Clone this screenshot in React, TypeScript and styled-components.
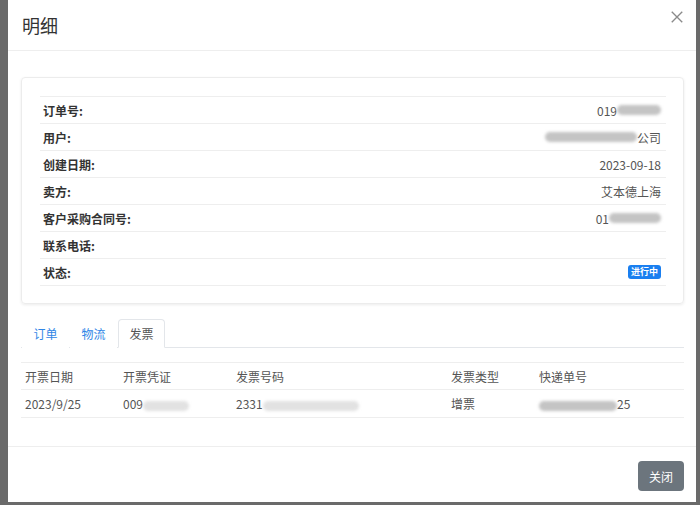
import type { ReactNode } from "react";
import styled, { createGlobalStyle } from "styled-components";

const GlobalStyle = createGlobalStyle`
  html, body {
    margin: 0;
    padding: 0;
    background: #6a6a6a;
    font-family: "Noto Sans CJK SC", "Noto Sans", sans-serif;
  }
`;

interface InfoRow {
  label: string;
  value: ReactNode;
}

const tabs = ["订单", "物流", "发票"];

const Detail = () => {
  const infoRows: InfoRow[] = [
    {
      label: "订单号:",
      value: (
        <>
          019
          <Blur $w={44} />
        </>
      ),
    },
    {
      label: "用户:",
      value: (
        <>
          <Blur $w={92} />
          公司
        </>
      ),
    },
    { label: "创建日期:", value: "2023-09-18" },
    { label: "卖方:", value: "艾本德上海" },
    {
      label: "客户采购合同号:",
      value: (
        <>
          01
          <Blur $w={52} />
        </>
      ),
    },
    { label: "联系电话:", value: "" },
    { label: "状态:", value: <Badge>进行中</Badge> },
  ];

  return (
    <>
      <GlobalStyle />
      <Modal>
        <Header>
          <Title>明细</Title>
          <CloseIcon viewBox="0 0 16 16">
            <path d="M2 2 L14 14 M14 2 L2 14" />
          </CloseIcon>
        </Header>

        <Body>
          <Card>
            {infoRows.map((row) => (
              <Row key={row.label}>
                <Label>{row.label}</Label>
                <Value>{row.value}</Value>
              </Row>
            ))}
          </Card>

          <TabNav>
            {tabs.map((t) => (
              <Tab key={t} $active={t === "发票"}>
                {t}
              </Tab>
            ))}
          </TabNav>

          <Table>
            <colgroup>
              <col style={{ width: 98 }} />
              <col style={{ width: 113 }} />
              <col style={{ width: 215 }} />
              <col style={{ width: 88 }} />
              <col />
            </colgroup>
            <thead>
              <tr>
                <th>开票日期</th>
                <th>开票凭证</th>
                <th>发票号码</th>
                <th>发票类型</th>
                <th>快递单号</th>
              </tr>
            </thead>
            <tbody>
              <tr>
                <td>2023/9/25</td>
                <td>
                  009
                  <Blur $w={46} $light />
                </td>
                <td>
                  2331
                  <Blur $w={96} $light />
                </td>
                <td>增票</td>
                <td>
                  <Blur $w={78} />
                  25
                </td>
              </tr>
            </tbody>
          </Table>
        </Body>

        <Footer>
          <CloseButton>关闭</CloseButton>
        </Footer>
      </Modal>
    </>
  );
};

const Modal = styled.div`
  margin-left: 8px;
  width: 688px;
  height: 502px;
  background: #fff;
  display: flex;
  flex-direction: column;
`;

const Header = styled.div`
  height: 51px;
  box-sizing: border-box;
  border-bottom: 1px solid #eeeeee;
  padding: 0 12px 0 14px;
  display: flex;
  align-items: center;
  justify-content: space-between;
`;

const Title = styled.h1`
  margin: 0;
  font-size: 18px;
  font-weight: 400;
  color: #333;
  line-height: 1;
`;

const CloseIcon = styled.svg`
  width: 14px;
  height: 14px;
  margin-bottom: 16px;
  fill: none;
  stroke: #8a8a8a;
  stroke-width: 1.6;
`;

const Body = styled.div`
  flex: 1;
  padding: 26px 12px 0 13px;
`;

const Card = styled.div`
  border: 1px solid #ececec;
  border-radius: 4px;
  box-shadow: 0 1px 3px rgba(0, 0, 0, 0.08);
  padding: 18px 17px 17px 18px;
`;

const Row = styled.div`
  height: 27px;
  box-sizing: border-box;
  border-top: 1px solid #eeeeee;
  display: flex;
  align-items: center;
  justify-content: space-between;
  padding: 0 5px 0 3px;
  font-size: 12px;

  &:last-child {
    border-bottom: 1px solid #eeeeee;
    height: 28px;
  }
`;

const Label = styled.span`
  font-weight: 700;
  color: #333;
`;

const Value = styled.span`
  color: #555;
  display: flex;
  align-items: center;
`;

const Blur = styled.span<{ $w: number; $light?: boolean }>`
  display: inline-block;
  width: ${(p) => p.$w}px;
  height: 10px;
  border-radius: 5px;
  background: ${(p) => (p.$light ? "#e2e2e2" : "#c4c4c4")};
  filter: blur(1.5px);
  vertical-align: middle;
`;

const Badge = styled.span`
  background: #1a7ff0;
  color: #fff;
  font-size: 9px;
  font-weight: 700;
  padding: 1px 3px;
  border-radius: 3px;
  line-height: 12px;
`;

const TabNav = styled.div`
  margin-top: 15px;
  height: 29px;
  box-sizing: border-box;
  border-bottom: 1px solid #e3e6ea;
  display: flex;
  gap: 1px;
  padding-left: 1px;
`;

const Tab = styled.div<{ $active?: boolean }>`
  width: 47px;
  box-sizing: border-box;
  height: 29px;
  display: flex;
  align-items: center;
  justify-content: center;
  font-size: 12px;
  color: ${(p) => (p.$active ? "#555" : "#2f86e6")};
  border: 1px solid ${(p) => (p.$active ? "#e3e6ea" : "transparent")};
  border-bottom-color: ${(p) => (p.$active ? "#fff" : "transparent")};
  border-radius: 4px 4px 0 0;
  background: #fff;
`;

const Table = styled.table`
  margin-top: 14px;
  width: 100%;
  border-collapse: collapse;
  table-layout: fixed;
  font-size: 12px;
  color: #555;

  th,
  td {
    text-align: left;
    font-weight: 400;
    padding: 0 4px;
    border-top: 1px solid #eeeeee;
    white-space: nowrap;
  }

  th {
    height: 26px;
  }

  td {
    height: 27px;
    border-bottom: 1px solid #eeeeee;
  }
`;

const Footer = styled.div`
  height: 56px;
  box-sizing: border-box;
  border-top: 1px solid #eeeeee;
  display: flex;
  justify-content: flex-end;
  align-items: flex-start;
  padding: 14px 12px 0 0;
`;

const CloseButton = styled.button`
  width: 46px;
  height: 30px;
  border: none;
  border-radius: 4px;
  background: #6c757d;
  color: #fff;
  font-family: inherit;
  font-size: 12px;
  padding: 0;
`;

export default Detail;
